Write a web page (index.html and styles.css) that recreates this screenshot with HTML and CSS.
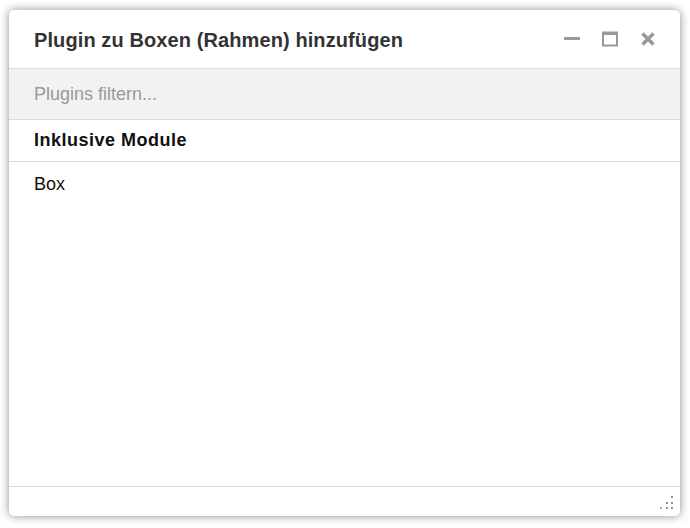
FILE: index.html
```html
<!DOCTYPE html>
<html lang="de">
<head>
<meta charset="utf-8">
<title>Plugin zu Boxen hinzufügen</title>
<link rel="stylesheet" href="styles.css">
</head>
<body>
<div class="dialog">
  <div class="header">
    <h1 class="title">Plugin zu Boxen (Rahmen) hinzufügen</h1>
    <div class="controls">
      <span class="ctl">
        <svg width="16" height="16" viewBox="0 0 16 16"><rect x="0" y="6" width="16" height="3" fill="#999"/></svg>
      </span>
      <span class="ctl">
        <svg width="16" height="16" viewBox="0 0 16 16"><rect x="1" y="1.5" width="14" height="13" fill="none" stroke="#999" stroke-width="2"/><rect x="1" y="1" width="14" height="3" fill="#999"/></svg>
      </span>
      <span class="ctl">
        <svg width="16" height="16" viewBox="0 0 16 16"><path d="M2.5 2.5 L13.5 13.5 M13.5 2.5 L2.5 13.5" stroke="#999" stroke-width="3.4" stroke-linecap="butt"/></svg>
      </span>
    </div>
  </div>
  <div class="filter">
    <input class="filter-input" type="text" placeholder="Plugins filtern...">
  </div>
  <div class="section">Inklusive Module</div>
  <div class="list">
    <div class="item">Box</div>
  </div>
  <div class="footer">
    <svg class="grip" width="14" height="14" viewBox="0 0 14 14">
      <rect x="11" y="0" width="2" height="2" fill="#8a8fa0"/>
      <rect x="6" y="6" width="2" height="2" fill="#8a8fa0"/>
      <rect x="11" y="6" width="2" height="2" fill="#8a8fa0"/>
      <rect x="0" y="11" width="2" height="2" fill="#aab"/>
      <rect x="6" y="11" width="2" height="2" fill="#8a8fa0"/>
      <rect x="11" y="11" width="2" height="2" fill="#8a8fa0"/>
    </svg>
  </div>
</div>
</body>
</html>
```

FILE: styles.css
```css
html, body {
  margin: 0;
  padding: 0;
  background: #ffffff;
}
body {
  padding: 10px 10px 12px 9px;
  font-family: "Liberation Sans", Arial, sans-serif;
}
.dialog {
  width: 671px;
  height: 506px;
  background: #fff;
  border-radius: 5px;
  box-shadow: 0 0 10px rgba(0, 0, 0, 0.45);
  display: flex;
  flex-direction: column;
  overflow: hidden;
}
.header {
  height: 58px;
  border-bottom: 1px solid #dcdcdc;
  display: flex;
  align-items: center;
  justify-content: space-between;
  padding: 0 24px 0 25px;
  flex: none;
}
.title {
  margin: 0;
  font-size: 20px;
  font-weight: bold;
  color: #333;
  letter-spacing: 0.1px;
  padding-top: 2px;
}
.controls {
  display: flex;
  gap: 22px;
  align-items: center;
}
.ctl {
  display: flex;
  width: 16px;
  height: 16px;
}
.filter {
  height: 50px;
  background: #f2f2f2;
  border-bottom: 1px solid #dcdcdc;
  display: flex;
  align-items: center;
  padding: 0 25px;
  flex: none;
}
.filter-input {
  border: none;
  background: transparent;
  outline: none;
  font-family: "Liberation Sans", Arial, sans-serif;
  font-size: 18px;
  color: #333;
  padding: 0;
  width: 100%;
}
.filter-input::placeholder {
  color: #999;
}
.section {
  height: 41px;
  border-bottom: 1px solid #dcdcdc;
  display: flex;
  align-items: center;
  padding: 0 25px;
  font-size: 18px;
  font-weight: bold;
  letter-spacing: 0.5px;
  color: #111;
  flex: none;
}
.list {
  flex: 1;
  padding: 11px 25px 0;
}
.item {
  font-size: 18px;
  color: #111;
  line-height: 22px;
}
.footer {
  border-top: 1px solid #dcdcdc;
  display: flex;
  justify-content: flex-end;
  align-items: flex-end;
  padding: 0 6px 6px 0;
  box-sizing: border-box;
  height: 30px;
  flex: none;
}
.grip {
  display: block;
}
```
